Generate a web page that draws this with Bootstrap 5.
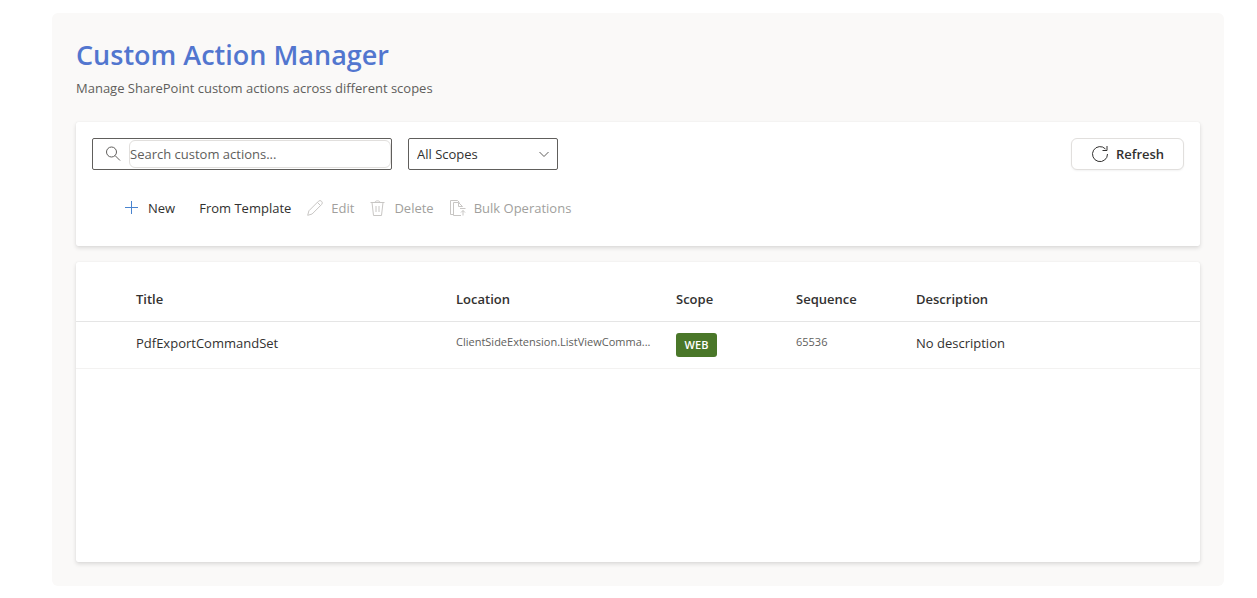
<!DOCTYPE html>
<html lang="en">
<head>
<meta charset="utf-8">
<meta name="viewport" content="width=device-width, initial-scale=1">
<title>Custom Action Manager</title>
<link href="https://cdn.jsdelivr.net/npm/bootstrap@5.3.0/dist/css/bootstrap.min.css" rel="stylesheet">
<style>
  body { font-family: "Segoe UI", "Open Sans", "Noto Sans", sans-serif; font-size: 13px; line-height: 20px; color: #323130; background: #fff; }
  .manager { margin: 13px 33px 12px 52px; padding: 24px; background: #faf9f8; border-radius: 6px; }
  .manager h1 { font-size: 27px; line-height: 36px; font-weight: 600; color: #5276cf; margin: 0 0 5px; }
  .subtitle { color: #605e5c; margin: 0 0 24px; }
  .panel { background: #fff; border-radius: 2px; box-shadow: 0 2px 4px rgba(0,0,0,.13), 0 0 1px rgba(0,0,0,.11); }
  .toolbar-panel { padding: 16px; margin-bottom: 16px; }
  .search-box { width: 300px; height: 32px; border: 1px solid #605e5c; border-radius: 2px; color: #605e5c; padding: 1px 0 1px 12px; }
  .search-box input { height: 28px; border: 1px solid #e1dfdd; border-radius: 6px; padding: 0; margin-left: 8px; min-width: 0; color: #323130; background: #fff; }
  .search-box input::placeholder { color: #605e5c; opacity: 1; }
  .scope-select { width: 150px; height: 32px; border: 1px solid #605e5c; border-radius: 2px; padding: 1px 28px 0 8px; font-size: 13px; color: #323130; background-image: url("data:image/svg+xml,%3Csvg xmlns='http://www.w3.org/2000/svg' viewBox='0 0 12 12' fill='none' stroke='%23605e5c'%3E%3Cpath d='M1.5 4 6 8.5 10.500 4'/%3E%3C/svg%3E"); background-size: 12px; background-position: right 7px center; }
  .refresh { --bs-btn-font-size: 13px; --bs-btn-line-height: 20px; --bs-btn-font-weight: 600; --bs-btn-color: #323130; --bs-btn-border-color: #e1dfdd; --bs-btn-bg: #fff; width: 113px; height: 32px; border-radius: 6px; padding: 0; gap: 7px; box-shadow: 0 1px 2px rgba(0,0,0,.05); }
  .commands { margin-top: 16px; padding-left: 24px; height: 44px; }
  .command { border: 0; background: none; padding: 0 8px; color: #323130; gap: 8px; height: 44px; }
  .command:disabled { color: #a19f9d; }
  .command:disabled svg { color: #c8c6c4; }
  .plus { color: #4a84cf; }
  svg { fill: none; stroke: currentColor; flex: none; }
  .list-panel { min-height: 300px; padding-top: 16px; }
  .actions-table { table-layout: fixed; margin: 0; --bs-table-bg: transparent; --bs-table-color: #323130; }
  .actions-table > :not(caption) > * > * { padding: 11px 8px 11px 12px; border-bottom: 1px solid #f3f2f1; color: #323130; }
  .actions-table > thead > tr > th { padding-top: 11px; padding-bottom: 12px; font-weight: 600; border-bottom-color: #e5e5e5; }
  .actions-table > tbody > tr > td { height: 47px; }
  .actions-table > tbody > tr > td.minor { font-size: 11px; color: #605e5c; padding-top: 10px; }
  .scope-badge { display: block; width: 41px; height: 24px; line-height: 24px; border-radius: 3px; background: #4a7729; color: #fff; font-size: 11px; font-weight: 600; text-align: center; }
  .w-check { width: 48px; } .w-title { width: 320px; } .w-location { width: 220px; } .w-short { width: 120px; }
</style>
</head>
<body>
<main class="manager">
  <h1>Custom Action Manager</h1>
  <p class="subtitle">Manage SharePoint custom actions across different scopes</p>

  <section class="panel toolbar-panel">
    <div class="d-flex align-items-center gap-3">
      <div class="search-box d-flex align-items-center">
        <svg width="16" height="16" viewBox="0 0 16 16" aria-hidden="true"><circle cx="6.500" cy="6" r="5"/><path d="m10 9.500 5 5"/></svg>
        <input class="flex-grow-1" type="text" placeholder="Search custom actions..." aria-label="Search custom actions">
      </div>
      <select class="form-select scope-select" aria-label="Scope">
        <option>All Scopes</option>
      </select>
      <button type="button" class="btn refresh d-flex align-items-center justify-content-center ms-auto">
        <svg width="18" height="18" viewBox="0 0 18 18" aria-hidden="true"><path d="M14.500 4A7.500 7.500 0 1 0 16.500 9M16 1v4.500h-4.500"/></svg>
        Refresh
      </button>
    </div>
    <div class="commands d-flex align-items-center">
      <button type="button" class="command d-flex align-items-center">
        <svg class="plus" width="16" height="16" viewBox="0 0 16 16" aria-hidden="true"><path d="M1 7.500h13M7.500 1v13"/></svg>New
      </button>
      <button type="button" class="command d-flex align-items-center ms-2">From Template</button>
      <button type="button" class="command d-flex align-items-center" disabled>
        <svg width="16" height="16" viewBox="0 0 16 16" aria-hidden="true"><path d="m.700 15.300 1.200-4.500L11.400 1.300a2.200 2.200 0 0 1 3.200 3.200L5.100 14ZM10.400 2.400l3.200 3.200"/></svg>Edit
      </button>
      <button type="button" class="command d-flex align-items-center" disabled>
        <svg width="16" height="16" viewBox="0 0 16 16" aria-hidden="true"><path d="M.500 2.500h14M5 2.500C5 .300 10 .300 10 2.500M2 2.500l1.500 13h8l1.500-13M6 6v6M9 6v6"/></svg>Delete
      </button>
      <button type="button" class="command d-flex align-items-center" disabled>
        <svg width="16" height="16" viewBox="0 0 16 16" aria-hidden="true"><path d="M3 14.500H.500V.500h7l2 2M11 15.500H3.500v-13h5l4 4h-4v-4M10 8.500h5.500M13 15.500v-5M11 12.500l2-2 2 2"/></svg>Bulk Operations
      </button>
    </div>
  </section>

  <section class="panel list-panel">
    <table class="table actions-table">
      <colgroup><col class="w-check"><col class="w-title"><col class="w-location"><col class="w-short"><col class="w-short"><col></colgroup>
      <thead>
        <tr><th aria-label="Selection"></th><th scope="col">Title</th><th scope="col">Location</th><th scope="col">Scope</th><th scope="col">Sequence</th><th scope="col">Description</th></tr>
      </thead>
      <tbody>
        <tr>
          <td></td>
          <td>PdfExportCommandSet</td>
          <td class="minor text-truncate">ClientSideExtension.ListViewComma...</td>
          <td><span class="scope-badge">WEB</span></td>
          <td class="minor">65536</td>
          <td>No description</td>
        </tr>
      </tbody>
    </table>
  </section>
</main>
<script src="https://cdn.jsdelivr.net/npm/bootstrap@5.3.0/dist/js/bootstrap.bundle.min.js"></script>
</body>
</html>
